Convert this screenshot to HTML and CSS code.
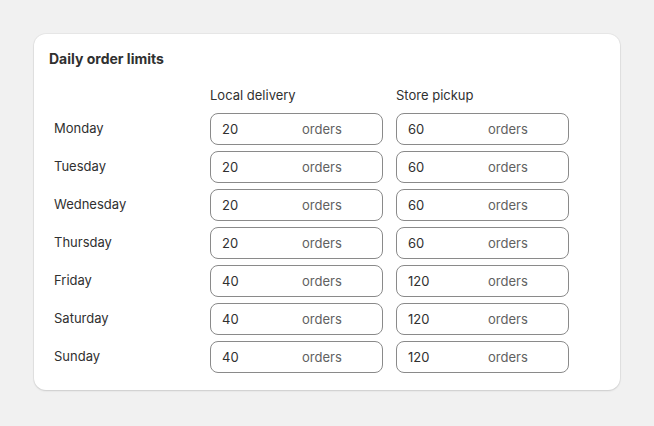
FILE: index.html
```html
<!DOCTYPE html>
<html lang="en">
<head>
    <meta charset="UTF-8">
    <meta name="viewport" content="width=device-width, initial-scale=1.0">
    <title>Daily order limits</title>
    <link rel="stylesheet" href="styles.css">
</head>
<body>

<div class="card">
    <h2 class="card-title">Daily order limits</h2>

    <div class="limits">
        <!-- Column headers -->
        <div class="col-head empty"></div>
        <div class="col-head">Local delivery</div>
        <div class="col-head">Store pickup</div>

        <div class="day">Monday</div>
        <div class="field"><span class="num">20</span><span class="suffix">orders</span></div>
        <div class="field"><span class="num">60</span><span class="suffix">orders</span></div>

        <div class="day">Tuesday</div>
        <div class="field"><span class="num">20</span><span class="suffix">orders</span></div>
        <div class="field"><span class="num">60</span><span class="suffix">orders</span></div>

        <div class="day">Wednesday</div>
        <div class="field"><span class="num">20</span><span class="suffix">orders</span></div>
        <div class="field"><span class="num">60</span><span class="suffix">orders</span></div>

        <div class="day">Thursday</div>
        <div class="field"><span class="num">20</span><span class="suffix">orders</span></div>
        <div class="field"><span class="num">60</span><span class="suffix">orders</span></div>

        <div class="day">Friday</div>
        <div class="field"><span class="num">40</span><span class="suffix">orders</span></div>
        <div class="field"><span class="num">120</span><span class="suffix">orders</span></div>

        <div class="day">Saturday</div>
        <div class="field"><span class="num">40</span><span class="suffix">orders</span></div>
        <div class="field"><span class="num">120</span><span class="suffix">orders</span></div>

        <div class="day">Sunday</div>
        <div class="field"><span class="num">40</span><span class="suffix">orders</span></div>
        <div class="field"><span class="num">120</span><span class="suffix">orders</span></div>
    </div>
</div>

</body>
</html>
```

FILE: styles.css
```css
/* Basic reset */
* {
    margin: 0;
    padding: 0;
    box-sizing: border-box;
}
body {
    padding: 34px;
    font-family: Inter, "Noto Sans", sans-serif;
    font-size: 13px;
    color: #303030;
    background-color: #f1f1f1;
}

/* Card */
.card {
    width: 586px;
    padding: 16px 15px 17px;
    background-color: #fff;
    border-radius: 12px;
    box-shadow: 0 1px 2px rgba(0, 0, 0, 0.12), 0 0 0 1px rgba(0, 0, 0, 0.04);
}
.card-title {
    font-size: 14px;
    font-weight: 650;
    line-height: 18px;
    color: #303030;
}

/* Limits grid */
.limits {
    display: grid;
    grid-template-columns: 148px 173px 173px;
    column-gap: 13px;
    row-gap: 6px;
    margin-top: 18px;
    align-items: center;
}
.col-head {
    line-height: 18px;
    margin-bottom: 3px;
}
.day {
    padding-left: 5px;
    line-height: 18px;
    margin-top: -3px;
}

/* Input field */
.field {
    display: flex;
    align-items: center;
    height: 32px;
    padding: 0 11px;
    border: 1px solid #8a8a8a;
    border-radius: 8px;
    background-color: #fff;
}
.field .num {
    width: 80px;
    color: #303030;
}
.field .suffix {
    color: #616161;
}
```
